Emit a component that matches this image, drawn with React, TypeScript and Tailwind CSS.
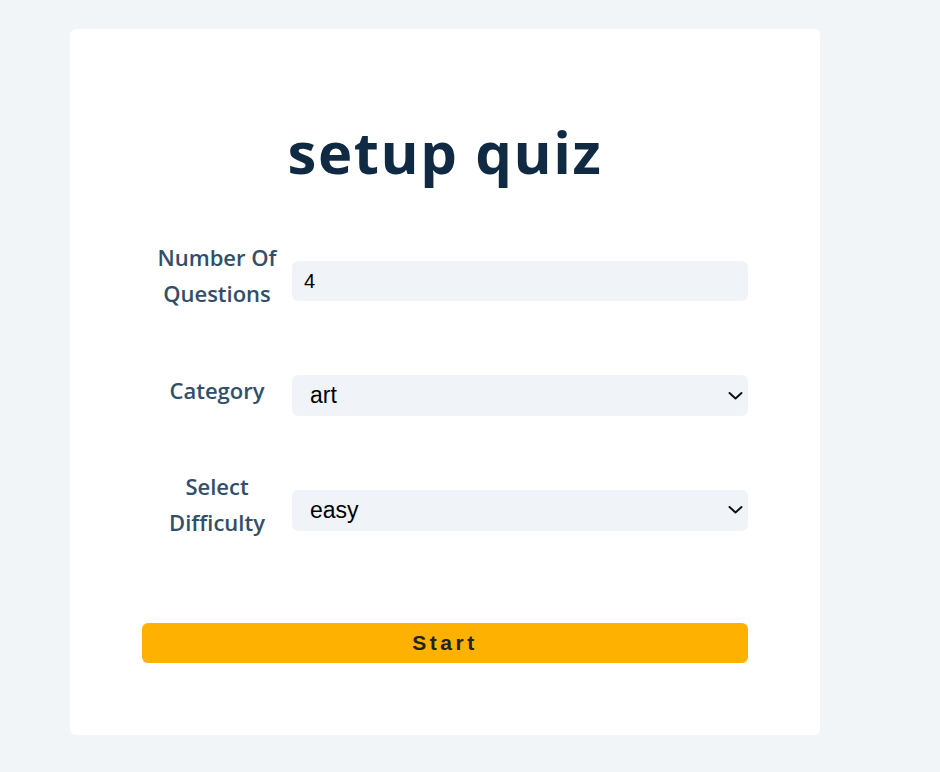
import { useState } from 'react';

function Chevron() {
  return (
    <svg
      className="pointer-events-none absolute right-[5px] top-1/2 -translate-y-1/2"
      width="15"
      height="9"
      viewBox="0 0 15 9"
      fill="none"
    >
      <polyline points="1.5,1.5 7.5,7 13.5,1.5" stroke="#111" strokeWidth="2" strokeLinecap="round" strokeLinejoin="round" />
    </svg>
  );
}

export default function App() {
  const [amount, setAmount] = useState('4');
  const [category, setCategory] = useState('art');
  const [difficulty, setDifficulty] = useState('easy');

  const labelCls =
    "-mt-[12px] w-[150px] shrink-0 text-center text-[22px] leading-[36px] font-semibold text-[#334e68] [font-family:'Open_Sans',sans-serif]";
  const fieldCls =
    "w-full rounded-md bg-[#f0f4f8] border-none outline-none text-black [font-family:'Liberation_Sans',Arial,sans-serif]";

  return (
    <main className="min-h-screen bg-[#f1f5f8] pt-[29px] pb-[37px]">
      <section className="ml-[70px] w-[750px] rounded-md bg-white px-[72px] pt-[87px] pb-[72px]">
        <h2 className="text-center text-[58px] leading-[72px] font-bold tracking-[1.6px] text-[#102a43] [font-family:'Open_Sans',sans-serif]">
          setup quiz
        </h2>

        <form className="mt-[63px] flex flex-col" onSubmit={(e) => e.preventDefault()}>
          <div className="flex flex-col gap-[64px]">
            {/* amount */}
            <div className="flex items-center">
              <label htmlFor="amount" className={labelCls}>
                Number Of Questions
              </label>
              <input
                id="amount"
                type="number"
                value={amount}
                onChange={(e) => setAmount(e.target.value)}
                className={`${fieldCls} h-[40px] text-[20px] px-[12px] [appearance:textfield] [&::-webkit-inner-spin-button]:appearance-none`}
              />
            </div>

            {/* category */}
            <div className="flex items-center">
              <label htmlFor="category" className={labelCls}>
                Category
              </label>
              <div className="relative w-full">
                <select
                  id="category"
                  value={category}
                  onChange={(e) => setCategory(e.target.value)}
                  className={`${fieldCls} h-[41px] text-[23px] appearance-none pl-[18px] pr-8`}
                >
                  <option value="art">art</option>
                  <option value="sports">sports</option>
                  <option value="history">history</option>
                  <option value="politics">politics</option>
                </select>
                <Chevron />
              </div>
            </div>

            {/* difficulty */}
            <div className="flex items-center">
              <label htmlFor="difficulty" className={labelCls}>
                Select Difficulty
              </label>
              <div className="relative w-full">
                <select
                  id="difficulty"
                  value={difficulty}
                  onChange={(e) => setDifficulty(e.target.value)}
                  className={`${fieldCls} h-[41px] text-[23px] appearance-none pl-[18px] pr-8`}
                >
                  <option value="easy">easy</option>
                  <option value="medium">medium</option>
                  <option value="hard">hard</option>
                </select>
                <Chevron />
              </div>
            </div>
          </div>

          <button
            type="submit"
            className="mt-[83px] h-[40px] w-full rounded-md bg-[#ffb100] text-[21px] font-bold tracking-[3.5px] text-[#222] [font-family:'Liberation_Sans',Arial,sans-serif]"
          >
            Start
          </button>
        </form>
      </section>
    </main>
  );
}
